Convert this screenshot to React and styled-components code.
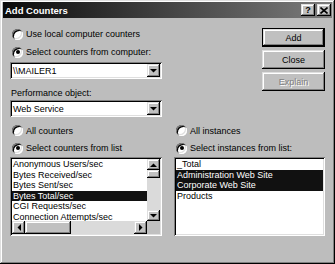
import React from 'react';
import styled, { createGlobalStyle, css } from 'styled-components';

const GlobalStyle = createGlobalStyle`
  html, body {
    margin: 0;
    padding: 0;
    background: #bdbdbd;
  }
  body {
    font-family: "Liberation Sans", Arial, sans-serif;
  }
`;

const raised = css`
  background: #c0c0c0;
  box-shadow: inset -1px -1px #000, inset 1px 1px #dfdfdf,
    inset -2px -2px #808080, inset 2px 2px #fff;
`;

const sunken = css`
  background: #fff;
  box-shadow: inset 1px 1px #808080, inset -1px -1px #fff,
    inset 2px 2px #000, inset -2px -2px #dfdfdf;
`;

const Window = styled.div`
  width: 335px;
  height: 264px;
  box-sizing: border-box;
  padding: 2px 3px 3px 3px;
  background: #bdbdbd;
  box-shadow: inset -1px -1px #000, inset 1px 1px #dfdfdf,
    inset -2px -2px #808080, inset 2px 2px #fff;
  display: flex;
  flex-direction: column;
  font-size: 9px;
  color: #000;
`;

const TitleBar = styled.div`
  height: 16px;
  display: flex;
  align-items: center;
  padding: 0 1px 0 2px;
  background: linear-gradient(to right, #0a0a0a, #7c7c7c);
  color: #fff;
`;

const Title = styled.span`
  font-weight: bold;
  font-size: 9.5px;
  flex: 1;
`;

const TitleButtons = styled.div`
  display: flex;
  gap: 2px;
`;

const TitleButton = styled.div`
  ${raised};
  width: 14px;
  height: 12px;
  display: flex;
  align-items: center;
  justify-content: center;
  color: #000;
  font-weight: bold;
  font-size: 9px;
  line-height: 1;
`;

const Body = styled.div`
  padding: 7px 7px 0 7px;
  display: flex;
  flex-direction: column;
`;

const TopSection = styled.div`
  display: flex;
  justify-content: space-between;
`;

const Column = styled.div`
  width: ${p => p.$w}px;
  display: flex;
  flex-direction: column;
`;

const ButtonColumn = styled.div`
  width: 63px;
  margin-top: 3px;
  display: flex;
  flex-direction: column;
  gap: 3px;
`;

const PushButton = styled.div`
  ${raised};
  height: 19px;
  box-sizing: border-box;
  display: flex;
  align-items: center;
  justify-content: center;
  ${p => p.$default && css`
    border: 1px solid #000;
  `}
  ${p => p.$disabled && css`
    color: #808080;
    text-shadow: 1px 1px #fff;
  `}
`;

const RadioRow = styled.div`
  height: ${p => p.$h || 18}px;
  display: flex;
  align-items: center;
  gap: 3px;
  padding-left: 2px;
  white-space: nowrap;
`;

const RadioCircle = styled.span`
  width: 11px;
  height: 11px;
  border-radius: 50%;
  background: #fff;
  box-shadow: inset 1px 1px #808080, inset -1px -1px #fff,
    inset 2px 2px #000, inset -2px -2px #dfdfdf;
  position: relative;
  flex: none;
  ${p => p.$checked && css`
    &::after {
      content: "";
      position: absolute;
      left: 3.5px;
      top: 3.5px;
      width: 4px;
      height: 4px;
      border-radius: 50%;
      background: #000;
    }
  `}
`;

const Label = styled.div`
  margin-top: 9px;
  line-height: 11px;
  padding-left: 1px;
`;

const Combo = styled.div`
  ${sunken};
  height: 17px;
  margin-top: 1px;
  box-sizing: border-box;
  padding: 2px;
  display: flex;
  align-items: center;
`;

const ComboText = styled.span`
  flex: 1;
  padding-left: 1px;
`;

const ArrowButton = styled.div`
  ${raised};
  width: ${p => p.$w || 13}px;
  height: ${p => p.$h || 13}px;
  display: flex;
  align-items: center;
  justify-content: center;
  flex: none;
`;

const BottomSection = styled.div`
  margin-top: 5px;
  display: flex;
  justify-content: space-between;
`;

const ListBox = styled.div`
  ${sunken};
  height: 79px;
  box-sizing: border-box;
  padding: 2px;
  display: grid;
  grid-template-columns: ${p => (p.$scroll ? '1fr 13px' : '1fr')};
  grid-template-rows: ${p => (p.$scroll ? '1fr 13px' : '1fr')};
  overflow: hidden;
`;

const Items = styled.div`
  overflow: hidden;
  min-height: 0;
`;

const Item = styled.div`
  line-height: 10.6px;
  height: 10.6px;
  padding-left: 1px;
  white-space: nowrap;
  ${p => p.$selected && css`
    background: #111;
    color: #fff;
  `}
`;

const VScroll = styled.div`
  display: flex;
  flex-direction: column;
  background: #dadada;
`;

const HScroll = styled.div`
  display: flex;
  background: #dadada;
`;

const Thumb = styled.div`
  ${raised};
  width: ${p => p.$w}px;
  height: ${p => p.$h}px;
  flex: none;
`;

const Spacer = styled.div`
  flex: 1;
`;

const Corner = styled.div`
  background: #c0c0c0;
`;

const Arrow = ({ dir }) => {
  const pts = {
    up: '0,4 7,4 3.5,0.5',
    down: '0,0 7,0 3.5,3.5',
    left: '4,0 4,7 0.5,3.5',
    right: '0,0 0,7 3.5,3.5',
  }[dir];
  const vertical = dir === 'up' || dir === 'down';
  return (
    <svg width={vertical ? 7 : 4} height={vertical ? 4 : 7} viewBox={vertical ? '0 0 7 4' : '0 0 4 7'}>
      <polygon points={pts} fill="#000" />
    </svg>
  );
};

const CloseGlyph = () => (
  <svg width="8" height="7" viewBox="0 0 8 7">
    <path d="M0.5 0.5 L7.5 6.5 M7.5 0.5 L0.5 6.5" stroke="#000" strokeWidth="1.6" />
  </svg>
);

const Radio = ({ checked, children, h }) => (
  <RadioRow $h={h}>
    <RadioCircle $checked={checked} />
    <span>{children}</span>
  </RadioRow>
);

const counters = [
  'Anonymous Users/sec',
  'Bytes Received/sec',
  'Bytes Sent/sec',
  'Bytes Total/sec',
  'CGI Requests/sec',
  'Connection Attempts/sec',
];

const instances = [
  { name: '_Total' },
  { name: 'Administration Web Site', selected: true },
  { name: 'Corporate Web Site', selected: true },
  { name: 'Products' },
];

export default function App() {
  return (
    <>
      <GlobalStyle />
      <Window>
        <TitleBar>
          <Title>Add Counters</Title>
          <TitleButtons>
            <TitleButton>?</TitleButton>
            <TitleButton><CloseGlyph /></TitleButton>
          </TitleButtons>
        </TitleBar>
        <Body>
          <TopSection>
            <Column $w={152}>
              <Radio>Use local computer counters</Radio>
              <Radio checked>Select counters from computer:</Radio>
              <Combo>
                <ComboText>\\MAILER1</ComboText>
                <ArrowButton><Arrow dir="down" /></ArrowButton>
              </Combo>
              <Label>Performance object:</Label>
              <Combo>
                <ComboText>Web Service</ComboText>
                <ArrowButton><Arrow dir="down" /></ArrowButton>
              </Combo>
            </Column>
            <ButtonColumn>
              <PushButton $default>Add</PushButton>
              <PushButton>Close</PushButton>
              <PushButton $disabled>Explain</PushButton>
            </ButtonColumn>
          </TopSection>
          <BottomSection>
            <Column $w={152}>
              <Radio h={17.5}>All counters</Radio>
              <Radio h={17.5} checked>Select counters from list</Radio>
              <ListBox $scroll>
                <Items>
                  {counters.map((c, i) => (
                    <Item key={c} $selected={i === 3}>{c}</Item>
                  ))}
                </Items>
                <VScroll>
                  <ArrowButton $h={11}><Arrow dir="up" /></ArrowButton>
                  <Thumb $w={13} $h={8} />
                  <Spacer />
                  <ArrowButton $h={11}><Arrow dir="down" /></ArrowButton>
                </VScroll>
                <HScroll>
                  <ArrowButton><Arrow dir="left" /></ArrowButton>
                  <Thumb $w={46} $h={13} />
                  <Spacer />
                  <ArrowButton><Arrow dir="right" /></ArrowButton>
                </HScroll>
                <Corner />
              </ListBox>
            </Column>
            <Column $w={151}>
              <Radio h={17.5}>All instances</Radio>
              <Radio h={17.5} checked>Select instances from list:</Radio>
              <ListBox>
                <Items>
                  {instances.map(it => (
                    <Item key={it.name} $selected={it.selected}>{it.name}</Item>
                  ))}
                </Items>
              </ListBox>
            </Column>
          </BottomSection>
        </Body>
      </Window>
    </>
  );
}
